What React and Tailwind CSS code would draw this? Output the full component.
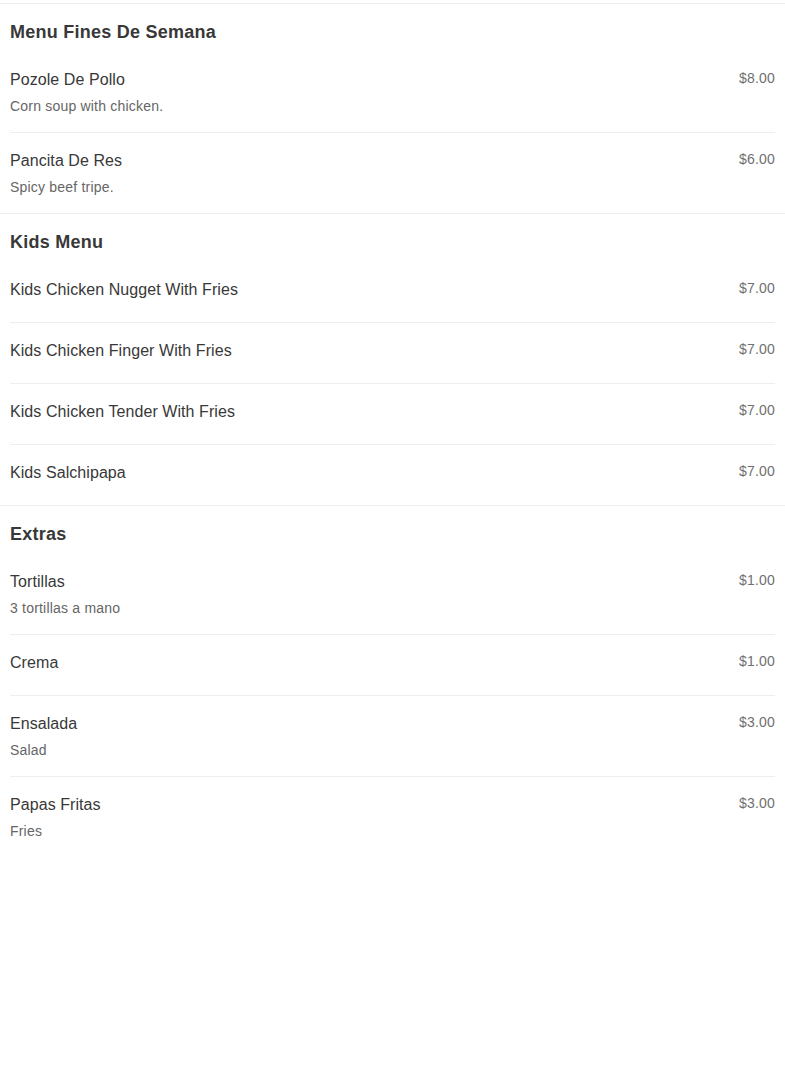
const sections = [
    {
        title: "Menu Fines De Semana",
        items: [
            {name: "Pozole De Pollo", desc: "Corn soup with chicken.", price: "$8.00"},
            {name: "Pancita De Res", desc: "Spicy beef tripe.", price: "$6.00"},
        ],
    },
    {
        title: "Kids Menu",
        items: [
            {name: "Kids Chicken Nugget With Fries", price: "$7.00"},
            {name: "Kids Chicken Finger With Fries", price: "$7.00"},
            {name: "Kids Chicken Tender With Fries", price: "$7.00"},
            {name: "Kids Salchipapa", price: "$7.00"},
        ],
    },
    {
        title: "Extras",
        items: [
            {name: "Tortillas", desc: "3 tortillas a mano", price: "$1.00"},
            {name: "Crema", price: "$1.00"},
            {name: "Ensalada", desc: "Salad", price: "$3.00"},
            {name: "Papas Fritas", desc: "Fries", price: "$3.00"},
        ],
    },
];

function MenuItem({item, last}) {
    return (
        <div className={`flex items-start justify-between pt-[16px] ${item.desc ? "pb-[16px]" : "pb-[20px]"} ${last ? "" : "border-b border-[#eeeeee]"}`}>
            <div className="flex flex-col">
                <span className="text-[16px] leading-[24px] tracking-[0.07px] text-[#383838]">{item.name}</span>
                {item.desc && (
                    <span className="mt-[4px] text-[14px] leading-[20px] tracking-[0.2px] text-[#666666]">{item.desc}</span>
                )}
            </div>
            <span className="text-[14px] leading-[20px] tracking-[0.2px] text-[#707070]">{item.price}</span>
        </div>
    );
}

export default function App() {
    return (
        <div className="min-h-[1082px] bg-white pt-[3px]" style={{fontFamily: '"Liberation Sans", Arial, sans-serif'}}>
            {sections.map((section) => (
                <section key={section.title} className="border-t border-[#eeeeee] px-[10px]">
                    <h2 className="pt-[14px] pb-[6px] text-[18px] font-bold leading-[28px] tracking-[0.25px] text-[#383838]">
                        {section.title}
                    </h2>
                    {section.items.map((item, i) => (
                        <MenuItem key={item.name} item={item} last={i === section.items.length - 1}/>
                    ))}
                </section>
            ))}
        </div>
    );
}
